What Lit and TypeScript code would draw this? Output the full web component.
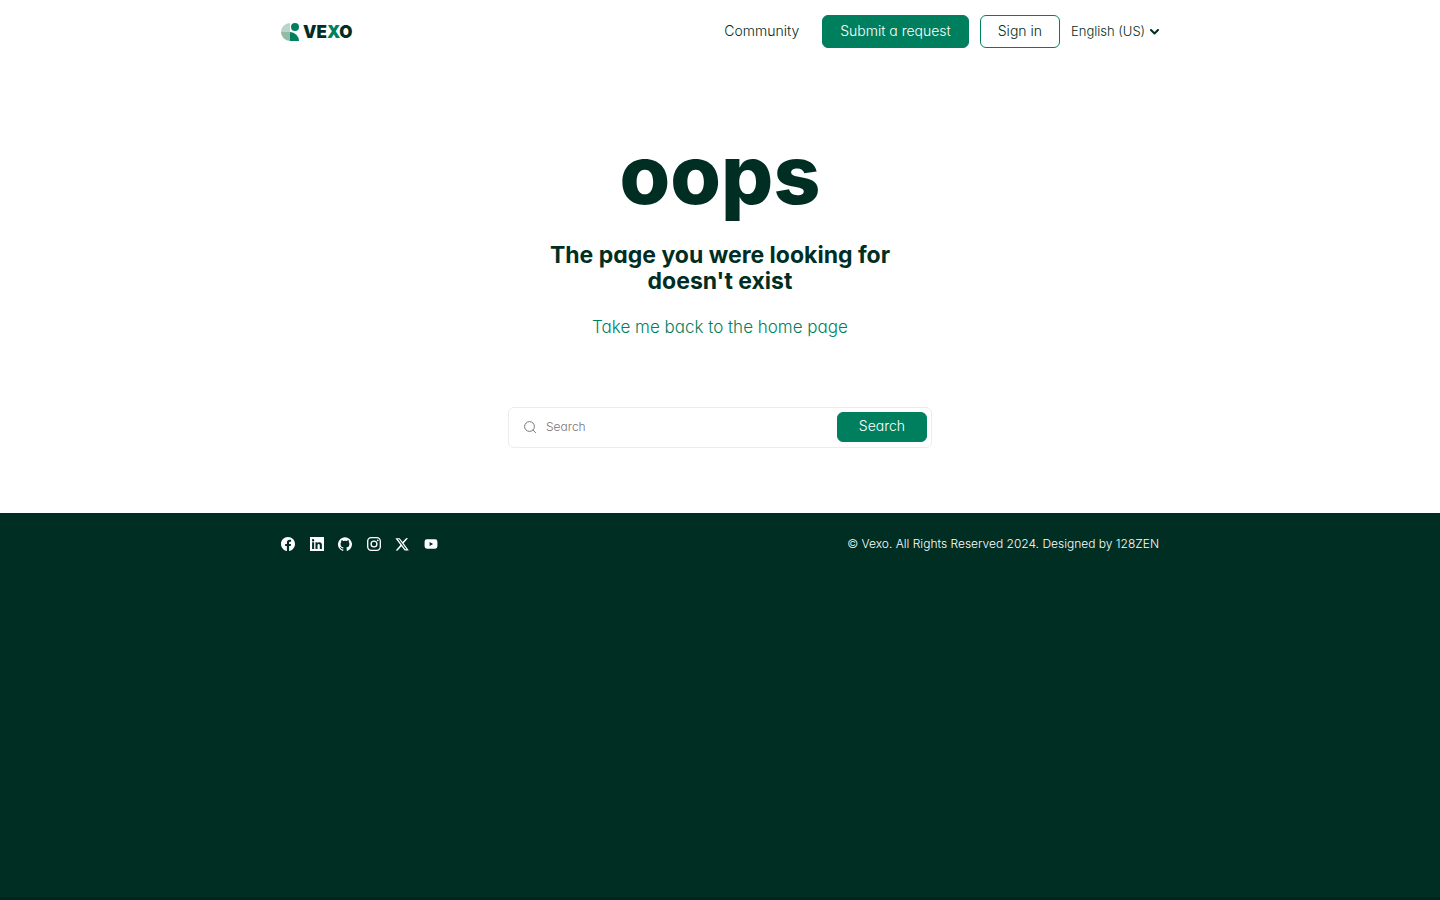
import { LitElement, html, css, svg } from "lit";
import { customElement } from "lit/decorators.js";

const socials = [
  {
    name: "Facebook",
    icon: svg`<path d="M24 12.07C24 5.4 18.63 0 12 0S0 5.4 0 12.07C0 18.1 4.39 23.1 10.13 24v-8.44H7.08v-3.49h3.05V9.41c0-3.02 1.79-4.69 4.53-4.69 1.31 0 2.68.24 2.68.24v2.97h-1.51c-1.49 0-1.96.93-1.96 1.89v2.25h3.33l-.53 3.49h-2.8V24C19.61 23.1 24 18.1 24 12.07Z"/>`,
  },
  {
    name: "LinkedIn",
    icon: svg`<path fill-rule="evenodd" d="M0 0h24v24H0ZM3.6 9.2v11.2h3.5V9.2ZM5.3 3.6a2 2 0 1 0 0 4.1 2 2 0 0 0 0-4.1ZM9.4 9.2v11.2h3.5v-5.6c0-1.5.4-2.9 2.1-2.9s1.8 1.6 1.8 3v5.5h3.6v-6.2c0-3-.7-5.3-4.2-5.3-1.7 0-2.8.9-3.3 1.8V9.2Z"/>`,
  },
  {
    name: "GitHub",
    icon: svg`<path d="M12 .5a12 12 0 0 0-3.8 23.4c.6.1.8-.3.8-.6v-2.2c-3.3.7-4-1.4-4-1.4-.6-1.4-1.4-1.8-1.4-1.8-1-.7.1-.7.1-.7 1.2.1 1.9 1.2 1.9 1.2 1 1.8 2.8 1.3 3.5 1 .1-.8.4-1.3.7-1.6-2.6-.3-5.4-1.3-5.4-5.9 0-1.3.4-2.4 1.2-3.2-.1-.3-.5-1.5.1-3.2 0 0 1-.3 3.3 1.2a11.5 11.5 0 0 1 6 0c2.3-1.5 3.3-1.2 3.3-1.2.7 1.7.2 2.9.1 3.2.8.8 1.2 1.9 1.2 3.2 0 4.6-2.8 5.6-5.5 5.9.4.4.8 1.1.8 2.2v3.3c0 .3.2.7.8.6A12 12 0 0 0 12 .5Z"/>`,
  },
  {
    name: "Instagram",
    icon: svg`<g fill="none" stroke="currentColor" stroke-width="2.3"><rect x="1.2" y="1.2" width="21.6" height="21.6" rx="6"/><circle cx="12" cy="12" r="5"/></g><circle cx="18.4" cy="5.6" r="1.5"/>`,
  },
  {
    name: "X",
    icon: svg`<path fill-rule="evenodd" d="M18.9 2h3.5l-7.7 8.8L23.7 23h-7.1l-5.6-7.3L4.6 23H1.1l8.2-9.4L.7 2H8l5 6.7ZM17.7 20.9h1.9L7 4H4.9Z"/>`,
  },
  {
    name: "YouTube",
    icon: svg`<path fill-rule="evenodd" d="M5 4h14q4 0 4 4v8q0 4-4 4H5q-4 0-4-4V8q0-4 4-4ZM9.6 8.5v7l6-3.5Z"/>`,
  },
];

@customElement("app-root")
export class AppRoot extends LitElement {
  static styles = css`
    :host {
      display: flex;
      flex-direction: column;
      min-height: 100vh;
      font-family: Inter, "Liberation Sans", sans-serif;
      font-feature-settings: "cv11";
      color: #002e23;
      background: #fff;
    }
    * { box-sizing: border-box; }
    a { color: inherit; text-decoration: none; }
    button, select, input { font: inherit; font-feature-settings: inherit; color: inherit; }
    .wrap {
      display: flex;
      align-items: center;
      justify-content: space-between;
      width: 100%;
      max-width: 878px;
      margin: 0 auto;
    }
    .header { height: 63px; }
    .logo { display: flex; align-items: center; gap: 4px; font-size: 17px; font-weight: 900; line-height: 18px; }
    .mark { width: 18px; height: 18px; }
    .x { color: #00805f; }
    .nav { display: flex; align-items: center; font-size: 14px; line-height: 18px; font-weight: 300; }
    .community { margin-right: 23px; padding-bottom: 2px; }
    .btn {
      display: flex;
      align-items: center;
      justify-content: center;
      height: 33px;
      border: 1px solid #007f5f;
      border-radius: 6px;
      background: #fff;
      padding: 0 17px 2px;
      margin-right: 11px;
      cursor: pointer;
    }
    .primary { background: #007f5f; color: #fff; }
    .lang { display: flex; align-items: center; gap: 4px; }
    .language { appearance: none; border: 0; padding: 0 0 2px; background: none; font-size: 13px; }
    .chevron { width: 9px; height: 6px; }
    .main { display: flex; flex-direction: column; align-items: center; padding: 70px 20px 65px; text-align: center; }
    .oops { margin: 0; font-size: 82px; line-height: 84px; font-weight: 800; }
    .title { margin: 25px 0 0; max-width: 380px; font-size: 23px; line-height: 26px; font-weight: 700; }
    .home { margin-top: 21px; font-size: 17px; line-height: 24px; font-weight: 300; color: #007f5f; }
    .search {
      display: flex;
      align-items: center;
      width: 100%;
      max-width: 424px;
      height: 41px;
      margin-top: 68px;
      padding: 0 4px 2px 15px;
      border: 1px solid #ececec;
      border-radius: 6px;
    }
    .glass { width: 12px; height: 12px; margin-right: 10px; color: #777; }
    .field { flex: 1; min-width: 0; border: 0; outline: 0; padding: 0; font-size: 12px; background: none; }
    .field::placeholder { color: #777; opacity: 1; }
    .go { width: 90px; height: 30px; margin: 0; }
    .go, .field { font-weight: 300; }
    .go { font-size: 14px; }
    .footer { flex: 1; background: #002e23; color: #fff; padding-top: 22px; border-bottom: 3px solid #00231b; }
    .social { display: flex; justify-content: space-between; width: 157px; }
    .social a { display: flex; }
    .social svg { width: 14px; height: 14px; fill: currentColor; }
    .copy { margin: 0; font-size: 12px; line-height: 18px; font-weight: 300; }
  `;

  render() {
    return html`
      <header class="wrap header">
        <a class="logo" href="#" aria-label="Vexo">
          <svg class="mark" viewBox="0 0 18 18" aria-hidden="true">
            <path fill="#b9d5c8" d="M9 0v9H0a9 9 0 0 1 9-9Z" />
            <path fill="#94bba8" d="M0 9h9v9a9 9 0 0 1-9-9Z" />
            <circle cx="14" cy="4" r="4" fill="#00805f" />
            <path fill="#00805f" d="M9 9a9 9 0 0 1 9 9H9Z" />
          </svg>
          <span>VE<span class="x">X</span>O</span>
        </a>
        <nav class="nav">
          <a class="community" href="#">Community</a>
          <a class="btn primary" href="#">Submit a request</a>
          <button class="btn" type="button">Sign in</button>
          <div class="lang">
            <select class="language" aria-label="Language"><option>English (US)</option></select>
            <svg class="chevron" viewBox="0 0 9 6" aria-hidden="true"><path d="M1 1l3.5 3.5L8 1" fill="none" stroke="currentColor" stroke-width="2" stroke-linecap="round" stroke-linejoin="round" /></svg>
          </div>
        </nav>
      </header>
      <main class="main">
        <h1 class="oops">oops</h1>
        <h2 class="title">The page you were looking for doesn't exist</h2>
        <a class="home" href="#">Take me back to the home page</a>
        <form class="search" role="search">
          <svg class="glass" viewBox="0 0 12 12" fill="none" stroke="currentColor" aria-hidden="true"><circle cx="5.5" cy="5.5" r="4.9" /><path d="M9 9l2.6 2.6" stroke-linecap="round" /></svg>
          <input class="field" type="search" placeholder="Search" aria-label="Search" />
          <button class="btn primary go" type="submit">Search</button>
        </form>
      </main>
      <footer class="footer">
        <div class="wrap">
          <div class="social">
            ${socials.map((s) => html`<a href="#" aria-label=${s.name}><svg viewBox="0 0 24 24" aria-hidden="true">${s.icon}</svg></a>`)}
          </div>
          <p class="copy">© Vexo. All Rights Reserved 2024. Designed by 128ZEN</p>
        </div>
      </footer>
    `;
  }
}
